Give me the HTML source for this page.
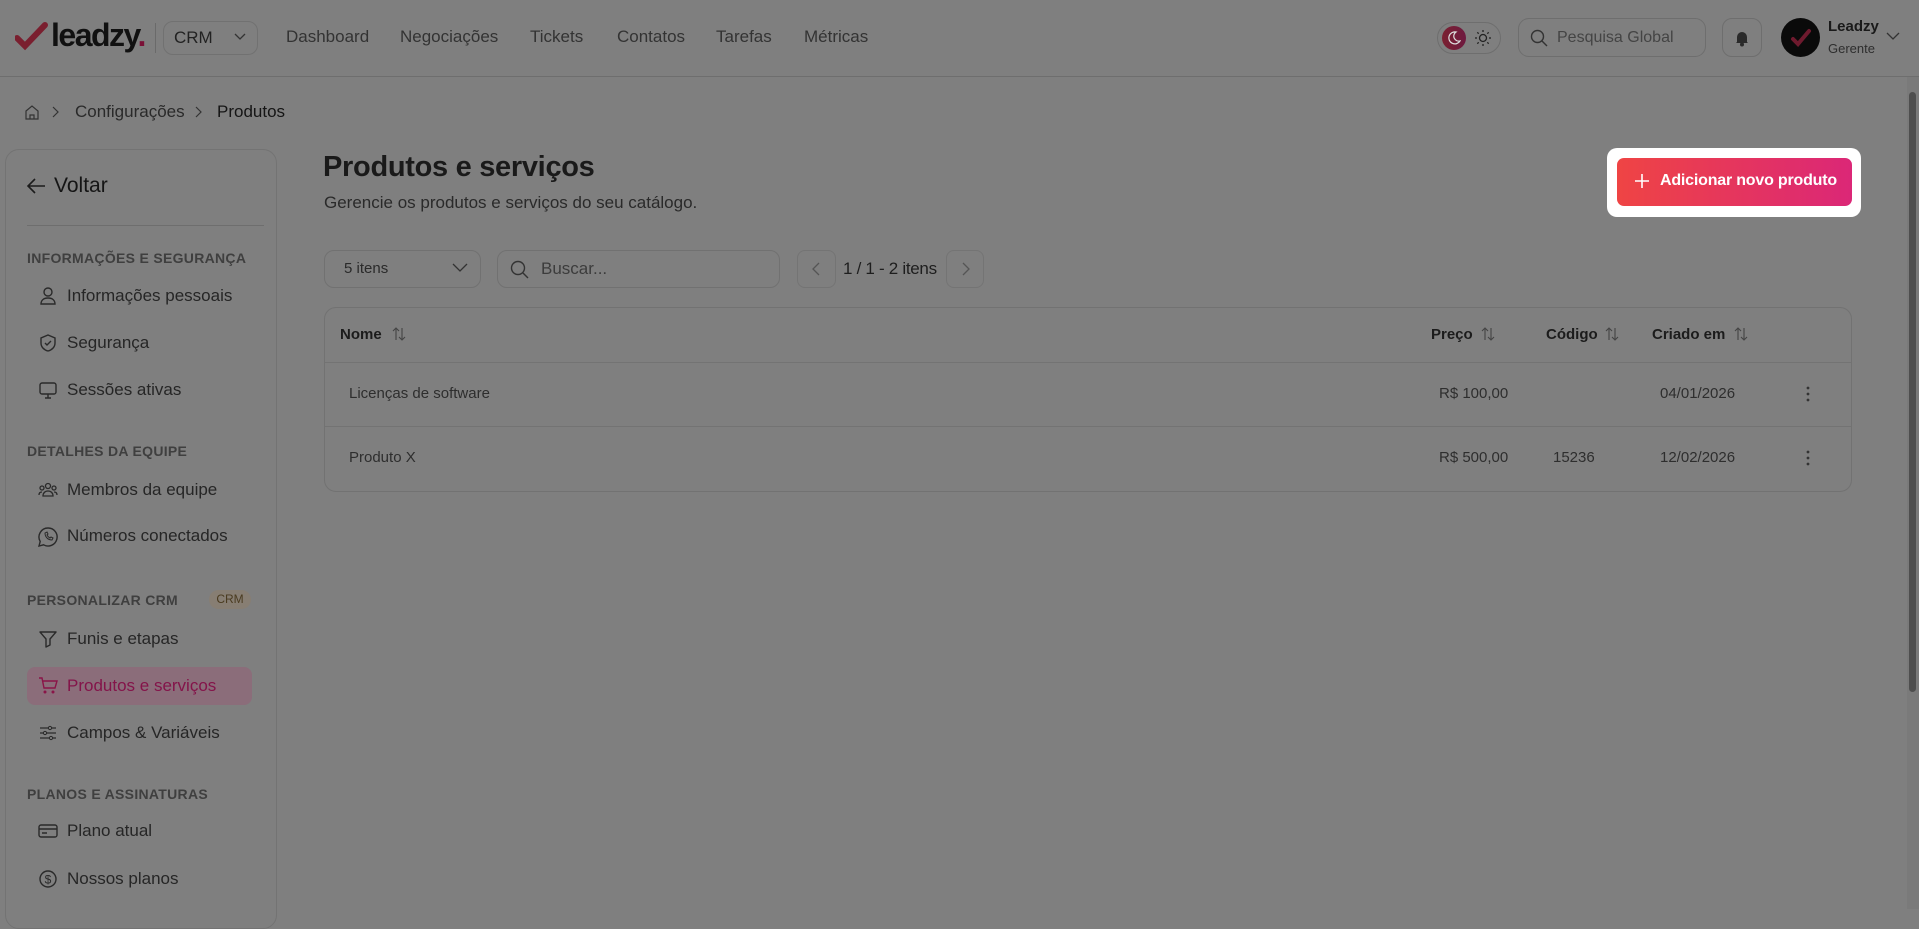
<!DOCTYPE html>
<html><head><meta charset="utf-8"><style>
*{box-sizing:border-box;margin:0;padding:0}
body{width:1919px;height:909px;overflow:hidden;background:#7f7f7f;font-family:"Liberation Sans",sans-serif;color:#1c1c1c;position:relative}
.a{position:absolute}
.hdr{left:0;top:0;width:1919px;height:77px;border-bottom:1px solid #6e6e6e}
.nav{font-size:17px;color:#333;top:27px}
.box{border:1px solid #717171;border-radius:10px}
.sec{font-size:14px;font-weight:bold;color:#3f3f3f;left:27px;letter-spacing:.3px}
.it{font-size:17px;color:#262626;left:67px}
.ic{left:38px;width:20px;height:20px}
.th{font-size:15px;font-weight:bold;color:#1c1c1c;top:326px}
.td{font-size:15px;color:#2e2e2e}
svg{display:block}
</style></head><body>
<div class="a hdr"></div>
<svg class="a" style="left:15px;top:22px" width="34" height="30" viewBox="0 0 34 30"><path d="M2 16 L10 24 L30 3" stroke="#7a1f2f" stroke-width="6" fill="none" stroke-linecap="round"/></svg>
<div class="a" style="left:51px;top:17px;font-size:32px;font-weight:bold;letter-spacing:-1.5px;color:#111">leadzy<span style="color:#7a1036">.</span></div>
<div class="a" style="left:155px;top:23px;width:1px;height:30px;background:#6a6a6a"></div>
<div class="a box" style="left:163px;top:21px;width:95px;height:34px"></div>
<div class="a" style="left:174px;top:28px;font-size:17px;color:#222">CRM</div>
<svg class="a" style="left:234px;top:32px" width="12" height="10"><path d="M1 2l5 5 5-5" stroke="#333" fill="none" stroke-width="1.3"/></svg>
<div class="a nav" style="left:286px">Dashboard</div>
<div class="a nav" style="left:400px">Negociações</div>
<div class="a nav" style="left:530px">Tickets</div>
<div class="a nav" style="left:617px">Contatos</div>
<div class="a nav" style="left:716px">Tarefas</div>
<div class="a nav" style="left:804px">Métricas</div>
<div class="a" style="left:1437px;top:22px;width:64px;height:32px;border:1px solid #6e6e6e;border-radius:16px"></div>
<div class="a" style="left:1442px;top:26px;width:24px;height:24px;border-radius:50%;background:linear-gradient(90deg,#7a2030,#6e1a40)"></div>
<svg class="a" style="left:1447px;top:31px" width="14" height="14" viewBox="0 0 14 14"><path d="M9 1a6 6 0 1 0 4 9A5 5 0 0 1 9 1z" stroke="#ddd" fill="none" stroke-width="1.2"/></svg>
<svg class="a" style="left:1474px;top:29px" width="18" height="18" viewBox="0 0 18 18"><circle cx="9" cy="9" r="3.5" stroke="#222" fill="none" stroke-width="1.3"/><path d="M9 1v2M9 15v2M1 9h2M15 9h2M3.3 3.3l1.4 1.4M13.3 13.3l1.4 1.4M3.3 14.7l1.4-1.4M13.3 4.7l1.4-1.4" stroke="#222" stroke-width="1.3"/></svg>
<div class="a" style="left:1518px;top:18px;width:188px;height:39px;border:1px solid #6e6e6e;border-radius:11px"></div>
<svg class="a" style="left:1530px;top:29px" width="18" height="18" viewBox="0 0 18 18"><circle cx="7.5" cy="7.5" r="6" stroke="#333" fill="none" stroke-width="1.4"/><path d="M12 12l5 5" stroke="#333" stroke-width="1.4"/></svg>
<div class="a" style="left:1557px;top:29px;font-size:16px;color:#444">Pesquisa Global</div>
<div class="a" style="left:1722px;top:18px;width:40px;height:39px;border:1px solid #6e6e6e;border-radius:10px"></div>
<svg class="a" style="left:1733px;top:29px" width="18" height="18" viewBox="0 0 18 18"><path d="M4 13V8a5 5 0 0 1 10 0v5l1 1H3z" fill="#2a2a2a"/><circle cx="9" cy="15.5" r="2" fill="#2a2a2a"/></svg>
<div class="a" style="left:1781px;top:18px;width:39px;height:39px;border-radius:50%;background:#0a0a0a"></div>
<svg class="a" style="left:1790px;top:28px" width="22" height="20" viewBox="0 0 22 20"><path d="M3 11l5 5L19 3" stroke="#6e1a2e" stroke-width="4" fill="none" stroke-linecap="round"/></svg>
<div class="a" style="left:1828px;top:18px;font-size:15px;font-weight:bold;color:#1a1a1a">Leadzy</div>
<div class="a" style="left:1828px;top:41px;font-size:13px;color:#2e2e2e">Gerente</div>
<svg class="a" style="left:1886px;top:31px" width="14" height="10"><path d="M1 2l6 6 6-6" stroke="#333" fill="none" stroke-width="1.3"/></svg>
<div class="a" style="left:1907px;top:77px;width:12px;height:832px;background:#7a7a7a"></div>
<div class="a" style="left:1909px;top:92px;width:7px;height:600px;background:#4e4e4e;border-radius:4px"></div>
<svg class="a" style="left:24px;top:104px" width="16" height="16" viewBox="0 0 16 16"><path d="M2 7l6-5 6 5v8H2z M6 15v-4h4v4" stroke="#333" fill="none" stroke-width="1.2"/></svg>
<svg class="a" style="left:52px;top:106px" width="8" height="12"><path d="M1 1l5 5-5 5" stroke="#333" fill="none" stroke-width="1.2"/></svg>
<div class="a" style="left:75px;top:102px;font-size:17px;color:#2a2a2a">Configurações</div>
<svg class="a" style="left:195px;top:106px" width="8" height="12"><path d="M1 1l5 5-5 5" stroke="#333" fill="none" stroke-width="1.2"/></svg>
<div class="a" style="left:217px;top:102px;font-size:17px;color:#151515">Produtos</div>
<div class="a" style="left:5px;top:149px;width:272px;height:780px;border:1px solid #737373;border-radius:14px"></div>
<svg class="a" style="left:26px;top:177px" width="20" height="18" viewBox="0 0 20 18"><path d="M19 9H2M9 2L2 9l7 7" stroke="#1c1c1c" fill="none" stroke-width="1.6"/></svg>
<div class="a" style="left:54px;top:174px;font-size:21px;color:#151515">Voltar</div>
<div class="a" style="left:27px;top:225px;width:237px;height:1px;background:#6e6e6e"></div>
<div class="a sec" style="top:250px">INFORMAÇÕES E SEGURANÇA</div>
<svg class="a ic" style="top:286px" viewBox="0 0 20 20"><circle cx="10" cy="6" r="4" stroke="#2a2a2a" fill="none" stroke-width="1.4"/><path d="M3 18c0-4 3-6 7-6s7 2 7 6z" stroke="#2a2a2a" fill="none" stroke-width="1.4"/></svg>
<div class="a it" style="top:286px">Informações pessoais</div>
<svg class="a ic" style="top:333px" viewBox="0 0 20 20"><path d="M10 2l7 3v5c0 4-3 7-7 8-4-1-7-4-7-8V5z" stroke="#2a2a2a" fill="none" stroke-width="1.4"/><path d="M7 10l2 2 4-4" stroke="#2a2a2a" fill="none" stroke-width="1.4"/></svg>
<div class="a it" style="top:333px">Segurança</div>
<svg class="a ic" style="top:380px" viewBox="0 0 20 20"><rect x="2" y="3" width="16" height="11" rx="2" stroke="#2a2a2a" fill="none" stroke-width="1.4"/><path d="M7 18h6M10 14v4" stroke="#2a2a2a" stroke-width="1.4"/></svg>
<div class="a it" style="top:380px">Sessões ativas</div>
<div class="a sec" style="top:443px">DETALHES DA EQUIPE</div>
<svg class="a ic" style="top:480px" viewBox="0 0 20 20"><circle cx="10" cy="6" r="2.5" stroke="#2a2a2a" fill="none" stroke-width="1.3"/><circle cx="4" cy="8" r="2" stroke="#2a2a2a" fill="none" stroke-width="1.3"/><circle cx="16" cy="8" r="2" stroke="#2a2a2a" fill="none" stroke-width="1.3"/><path d="M5 16c0-3 2-5 5-5s5 2 5 5zM1 15c0-2 1-3 3-3M19 15c0-2-1-3-3-3" stroke="#2a2a2a" fill="none" stroke-width="1.3"/></svg>
<div class="a it" style="top:480px">Membros da equipe</div>
<svg class="a ic" style="top:526px;left:37px;width:22px;height:22px" viewBox="0 0 22 22"><path d="M11 2a9 9 0 0 0-7.8 13.5L2 20l4.6-1.2A9 9 0 1 0 11 2z" stroke="#2a2a2a" fill="none" stroke-width="1.4"/><path d="M8 7c0 4 3 7 7 7l1-2-2-1-1 1c-1-.5-2.5-2-3-3l1-1-1-2z" stroke="#2a2a2a" fill="none" stroke-width="1"/></svg>
<div class="a it" style="top:526px">Números conectados</div>
<div class="a sec" style="top:592px">PERSONALIZAR CRM</div>
<div class="a" style="left:209px;top:590px;width:42px;height:19px;border-radius:10px;background:#877e73;font-size:12px;color:#4a3b20;text-align:center;line-height:19px">CRM</div>
<svg class="a ic" style="top:629px" viewBox="0 0 20 20"><path d="M2 3h16l-6 7v6l-4 2v-8z" stroke="#2a2a2a" fill="none" stroke-width="1.4" stroke-linejoin="round"/></svg>
<div class="a it" style="top:629px">Funis e etapas</div>
<div class="a" style="left:27px;top:667px;width:225px;height:38px;border-radius:8px;background:#8b6d7a"></div>
<svg class="a ic" style="top:676px" viewBox="0 0 20 20"><path d="M1 2h3l2 10h11l2-7H5" stroke="#8a1448" fill="none" stroke-width="1.4"/><circle cx="7" cy="16" r="1.5" fill="#8a1448"/><circle cx="15" cy="16" r="1.5" fill="#8a1448"/></svg>
<div class="a it" style="top:676px;color:#84144a">Produtos e serviços</div>
<svg class="a ic" style="top:723px" viewBox="0 0 20 20"><path d="M2 5h16M2 10h16M2 15h16" stroke="#2a2a2a" stroke-width="1.3"/><circle cx="12" cy="5" r="1.6" fill="#7f7f7f" stroke="#2a2a2a"/><circle cx="7" cy="10" r="1.6" fill="#7f7f7f" stroke="#2a2a2a"/><circle cx="13" cy="15" r="1.6" fill="#7f7f7f" stroke="#2a2a2a"/></svg>
<div class="a it" style="top:723px">Campos &amp; Variáveis</div>
<div class="a sec" style="top:786px">PLANOS E ASSINATURAS</div>
<svg class="a ic" style="top:821px" viewBox="0 0 20 20"><rect x="1" y="4" width="18" height="12" rx="2" stroke="#2a2a2a" fill="none" stroke-width="1.4"/><path d="M1 8h18M4 12h5" stroke="#2a2a2a" stroke-width="1.4"/></svg>
<div class="a it" style="top:821px">Plano atual</div>
<svg class="a ic" style="top:869px" viewBox="0 0 20 20"><circle cx="10" cy="10" r="8" stroke="#2a2a2a" fill="none" stroke-width="1.4"/><text x="10" y="14.5" font-size="12" text-anchor="middle" fill="#2a2a2a" font-family="Liberation Sans">$</text></svg>
<div class="a it" style="top:869px">Nossos planos</div>
<div class="a" style="left:323px;top:151px;font-size:29px;font-weight:bold;color:#1a1a1a;letter-spacing:-0.3px">Produtos e serviços</div>
<div class="a" style="left:324px;top:193px;font-size:17px;color:#2a2a2a">Gerencie os produtos e serviços do seu catálogo.</div>
<div class="a" style="left:1607px;top:148px;width:254px;height:69px;background:#fff;border-radius:10px"></div>
<div class="a" style="left:1617px;top:158px;width:235px;height:48px;border-radius:7px;background:linear-gradient(90deg,#ef4444,#db2777)"></div>
<svg class="a" style="left:1634px;top:173px" width="16" height="16"><path d="M8 1v14M1 8h14" stroke="#fff" stroke-width="1.6"/></svg>
<div class="a" style="left:1660px;top:172px;font-size:16px;font-weight:bold;color:#fff;letter-spacing:-0.2px">Adicionar novo produto</div>
<div class="a box" style="left:324px;top:250px;width:157px;height:38px"></div>
<div class="a" style="left:344px;top:260px;font-size:15px;color:#2a2a2a">5 itens</div>
<svg class="a" style="left:452px;top:263px" width="16" height="10"><path d="M1 1l7 7 7-7" stroke="#333" fill="none" stroke-width="1.3"/></svg>
<div class="a box" style="left:497px;top:250px;width:283px;height:38px"></div>
<svg class="a" style="left:510px;top:260px" width="19" height="19" viewBox="0 0 19 19"><circle cx="8" cy="8" r="6.5" stroke="#333" fill="none" stroke-width="1.4"/><path d="M13 13l5 5" stroke="#333" stroke-width="1.4"/></svg>
<div class="a" style="left:541px;top:259px;font-size:17px;color:#3c3c3c">Buscar...</div>
<div class="a" style="left:797px;top:250px;width:39px;height:38px;border:1px solid #747474;border-radius:8px"></div>
<svg class="a" style="left:811px;top:262px" width="10" height="14"><path d="M8 1L2 7l6 6" stroke="#555" fill="none" stroke-width="1.3"/></svg>
<div class="a" style="left:843px;top:259px;font-size:17px;color:#1e1e1e;letter-spacing:-0.3px">1 / 1 - 2 itens</div>
<div class="a" style="left:946px;top:250px;width:38px;height:38px;border:1px solid #747474;border-radius:8px"></div>
<svg class="a" style="left:961px;top:262px" width="10" height="14"><path d="M2 1l6 6-6 6" stroke="#555" fill="none" stroke-width="1.3"/></svg>
<div class="a" style="left:324px;top:307px;width:1528px;height:185px;border:1px solid #727272;border-radius:12px"></div>
<div class="a" style="left:325px;top:362px;width:1526px;height:1px;background:#737373"></div>
<div class="a" style="left:325px;top:426px;width:1526px;height:1px;background:#737373"></div>
<div class="a th" style="left:340px">Nome</div>
<div class="a th" style="left:1431px">Preço</div>
<div class="a th" style="left:1546px">Código</div>
<div class="a th" style="left:1652px">Criado em</div>
<svg class="a" style="left:392px;top:326px" width="14" height="16" viewBox="0 0 14 16"><path d="M4 14V2M1 5l3-3 3 3M10 2v12M7 11l3 3 3-3" stroke="#444" fill="none" stroke-width="1.1"/></svg>
<svg class="a" style="left:1481px;top:326px" width="14" height="16" viewBox="0 0 14 16"><path d="M4 14V2M1 5l3-3 3 3M10 2v12M7 11l3 3 3-3" stroke="#444" fill="none" stroke-width="1.1"/></svg>
<svg class="a" style="left:1605px;top:326px" width="14" height="16" viewBox="0 0 14 16"><path d="M4 14V2M1 5l3-3 3 3M10 2v12M7 11l3 3 3-3" stroke="#444" fill="none" stroke-width="1.1"/></svg>
<svg class="a" style="left:1734px;top:326px" width="14" height="16" viewBox="0 0 14 16"><path d="M4 14V2M1 5l3-3 3 3M10 2v12M7 11l3 3 3-3" stroke="#444" fill="none" stroke-width="1.1"/></svg>
<div class="a td" style="left:349px;top:385px">Licenças de software</div>
<div class="a td" style="left:1439px;top:385px">R$ 100,00</div>
<div class="a td" style="left:1660px;top:385px">04/01/2026</div>
<div class="a td" style="left:349px;top:449px">Produto X</div>
<div class="a td" style="left:1439px;top:449px">R$ 500,00</div>
<div class="a td" style="left:1553px;top:449px">15236</div>
<div class="a td" style="left:1660px;top:449px">12/02/2026</div>
<svg class="a" style="left:1805px;top:386px" width="6" height="16"><circle cx="3" cy="2" r="1.4" fill="#333"/><circle cx="3" cy="8" r="1.4" fill="#333"/><circle cx="3" cy="14" r="1.4" fill="#333"/></svg>
<svg class="a" style="left:1805px;top:450px" width="6" height="16"><circle cx="3" cy="2" r="1.4" fill="#333"/><circle cx="3" cy="8" r="1.4" fill="#333"/><circle cx="3" cy="14" r="1.4" fill="#333"/></svg>
</body></html>
